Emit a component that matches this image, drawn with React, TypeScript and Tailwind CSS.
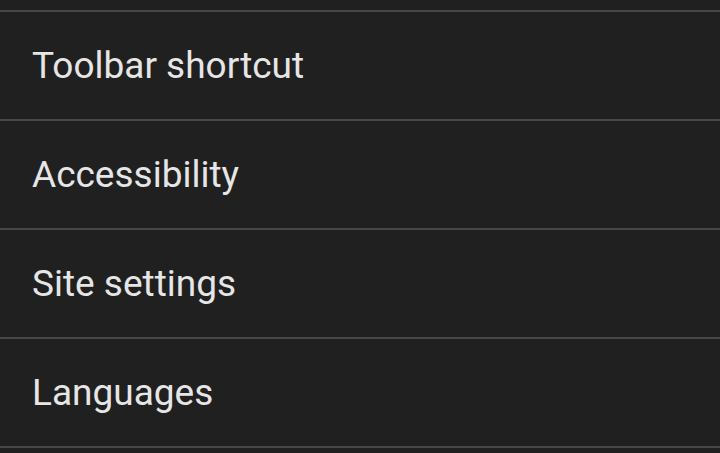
const items = ["Toolbar shortcut", "Accessibility", "Site settings", "Languages"];

export default function App() {
  return (
    <div
      className="h-[453px] w-[720px] overflow-hidden bg-[#202020]"
      style={{ fontFamily: "Roboto, 'Noto Sans', sans-serif" }}
    >
      <div className="h-[10px]" />
      <div className="border-t-2 border-[#474747]">
        {items.map((label) => (
          <div
            key={label}
            className="flex h-[109px] items-center border-b-2 border-[#474747] pl-[32px] text-[37px] text-[#e6e6e6]"
          >
            {label}
          </div>
        ))}
      </div>
    </div>
  );
}
